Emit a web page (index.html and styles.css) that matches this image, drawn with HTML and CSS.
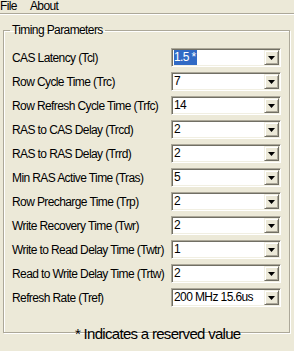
FILE: index.html
```html
<!DOCTYPE html>
<html>
<head>
<meta charset="utf-8">
<link rel="stylesheet" href="styles.css">
</head>
<body>
<div class="menubar"><span class="menu-item">File</span><span class="menu-item">About</span></div>
<div class="separator"></div>
<fieldset class="group">
  <legend class="group-title">Timing Parameters</legend>
  <div class="rows">
    <div class="row"><span class="lbl">CAS Latency (Tcl)</span><div class="combo"><span class="val"><span class="sel">1.5 *</span></span><span class="btn"><svg width="7" height="4" viewBox="0 0 7 4"><path d="M0 0h7L3.5 4z" fill="#000"/></svg></span></div></div>
    <div class="row"><span class="lbl">Row Cycle Time (Trc)</span><div class="combo"><span class="val">7</span><span class="btn"><svg width="7" height="4" viewBox="0 0 7 4"><path d="M0 0h7L3.5 4z" fill="#000"/></svg></span></div></div>
    <div class="row"><span class="lbl">Row Refresh Cycle Time (Trfc)</span><div class="combo"><span class="val">14</span><span class="btn"><svg width="7" height="4" viewBox="0 0 7 4"><path d="M0 0h7L3.5 4z" fill="#000"/></svg></span></div></div>
    <div class="row"><span class="lbl">RAS to CAS Delay (Trcd)</span><div class="combo"><span class="val">2</span><span class="btn"><svg width="7" height="4" viewBox="0 0 7 4"><path d="M0 0h7L3.5 4z" fill="#000"/></svg></span></div></div>
    <div class="row"><span class="lbl">RAS to RAS Delay (Trrd)</span><div class="combo"><span class="val">2</span><span class="btn"><svg width="7" height="4" viewBox="0 0 7 4"><path d="M0 0h7L3.5 4z" fill="#000"/></svg></span></div></div>
    <div class="row"><span class="lbl">Min RAS Active Time (Tras)</span><div class="combo"><span class="val">5</span><span class="btn"><svg width="7" height="4" viewBox="0 0 7 4"><path d="M0 0h7L3.5 4z" fill="#000"/></svg></span></div></div>
    <div class="row"><span class="lbl">Row Precharge Time (Trp)</span><div class="combo"><span class="val">2</span><span class="btn"><svg width="7" height="4" viewBox="0 0 7 4"><path d="M0 0h7L3.5 4z" fill="#000"/></svg></span></div></div>
    <div class="row"><span class="lbl">Write Recovery Time (Twr)</span><div class="combo"><span class="val">2</span><span class="btn"><svg width="7" height="4" viewBox="0 0 7 4"><path d="M0 0h7L3.5 4z" fill="#000"/></svg></span></div></div>
    <div class="row"><span class="lbl">Write to Read Delay Time (Twtr)</span><div class="combo"><span class="val">1</span><span class="btn"><svg width="7" height="4" viewBox="0 0 7 4"><path d="M0 0h7L3.5 4z" fill="#000"/></svg></span></div></div>
    <div class="row"><span class="lbl">Read to Write Delay Time (Trtw)</span><div class="combo"><span class="val">2</span><span class="btn"><svg width="7" height="4" viewBox="0 0 7 4"><path d="M0 0h7L3.5 4z" fill="#000"/></svg></span></div></div>
    <div class="row"><span class="lbl">Refresh Rate (Tref)</span><div class="combo"><span class="val">200 MHz 15.6us</span><span class="btn"><svg width="7" height="4" viewBox="0 0 7 4"><path d="M0 0h7L3.5 4z" fill="#000"/></svg></span></div></div>
  </div>
  <p class="note">* Indicates a reserved value</p>
</fieldset>
</body>
</html>
```
FILE: styles.css
```css
html, body {
  margin: 0;
  padding: 0;
}
body {
  width: 294px;
  height: 351px;
  overflow: hidden;
  background: #ECE9D8;
  font-family: "Liberation Sans", Arial, sans-serif;
  font-size: 12px;
  letter-spacing: -0.6px;
  color: #000;
}
.menubar {
  height: 13px;
  display: flex;
  gap: 13px;
  line-height: 12px;
}
.menu-item {
  display: block;
}
.separator {
  height: 1px;
  border-top: 1px solid #ACA899;
  background: #fff;
}
.group {
  margin: 8px 4px 0 3px;
  padding: 11px 8px 0 8px;
  border: 1px solid #ACA899;
  box-shadow: inset 1px 1px 0 #fff, 1px 1px 0 #fff;
  height: 310px;
  box-sizing: border-box;
  min-width: 0;
}
.group-title {
  padding: 0 2px;
  margin-left: -2px;
  line-height: 14px;
}
.rows {
  display: flex;
  flex-direction: column;
  gap: 5px;
}
.row {
  display: grid;
  grid-template-columns: 159px 110px;
  align-items: center;
  height: 19px;
}
.lbl {
  white-space: nowrap;
}
.combo {
  box-sizing: border-box;
  height: 19px;
  display: flex;
  background: #fff;
  border-top: 1px solid #ACA899;
  border-left: 1px solid #ACA899;
  border-right: 1px solid #fff;
  border-bottom: 1px solid #fff;
  box-shadow: inset 1px 1px 0 #716F64, inset -1px -1px 0 #F1EFE2;
  padding: 1px;
}
.val {
  flex: 1;
  padding-left: 1px;
  line-height: 15px;
  white-space: nowrap;
}
.sel {
  display: inline-block;
  background: #316AC5;
  color: #fff;
  padding-right: 1px;
}
.btn {
  width: 15px;
  height: 15px;
  box-sizing: border-box;
  background: #ECE9D8;
  border-top: 1px solid #F1EFE2;
  border-left: 1px solid #F1EFE2;
  border-right: 1px solid #716F64;
  border-bottom: 1px solid #716F64;
  box-shadow: inset 1px 1px 0 #fff, inset -1px -1px 0 #ACA899;
  display: flex;
  align-items: center;
  justify-content: center;
}
.btn svg {
  display: block;
  margin-top: 1px;
}
.note {
  margin: 18px 0 0 0;
  padding-left: 63px;
  font-size: 15px;
  letter-spacing: -0.7px;
  line-height: 18px;
}
```
